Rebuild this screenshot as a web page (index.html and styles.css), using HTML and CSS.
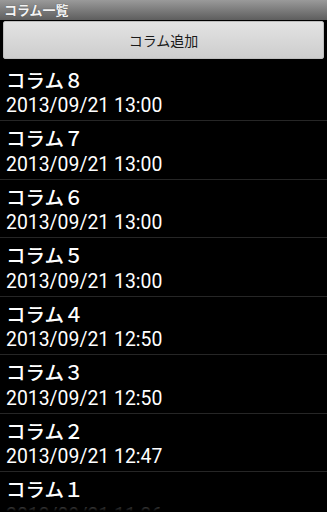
FILE: index.html
```html
<!DOCTYPE html>
<html lang="ja">
<head>
<meta charset="utf-8">
<title>コラム一覧</title>
<link rel="stylesheet" href="styles.css">
</head>
<body>
<div class="screen">
  <header class="titlebar">コラム一覧</header>
  <div class="toolbar">
    <button class="add-btn" type="button">コラム追加</button>
  </div>
  <ul class="list">
    <li class="row"><div class="name">コラム８</div><div class="date">2013/09/21 13:00</div></li>
    <li class="row"><div class="name">コラム７</div><div class="date">2013/09/21 13:00</div></li>
    <li class="row"><div class="name">コラム６</div><div class="date">2013/09/21 13:00</div></li>
    <li class="row"><div class="name">コラム５</div><div class="date">2013/09/21 13:00</div></li>
    <li class="row"><div class="name">コラム４</div><div class="date">2013/09/21 12:50</div></li>
    <li class="row"><div class="name">コラム３</div><div class="date">2013/09/21 12:50</div></li>
    <li class="row"><div class="name">コラム２</div><div class="date">2013/09/21 12:47</div></li>
    <li class="row"><div class="name">コラム１</div><div class="date">2013/09/21 11:36</div></li>
  </ul>
  <div class="fade"></div>
</div>
</body>
</html>
```
FILE: styles.css
```css
html, body {
  margin: 0;
  padding: 0;
  background: #000;
}
body {
  font-family: Roboto, "Noto Sans CJK JP", sans-serif;
  color: #fff;
}
.screen {
  position: relative;
  width: 327px;
  height: 512px;
  overflow: hidden;
  background: #000;
}
.titlebar {
  height: 20px;
  box-sizing: border-box;
  padding: 1px 0 0 4px;
  font-family: "Noto Sans CJK JP", sans-serif;
  font-weight: bold;
  font-size: 13px;
  line-height: 17px;
  color: #f4f4f4;
  text-shadow: 0 0 1px #444;
  background: linear-gradient(#9a9a9a, #5e5e5e);
}
.toolbar {
  padding: 1px 3px 3.5px 3px;
}
.add-btn {
  display: block;
  width: 100%;
  height: 38px;
  margin: 0;
  border: 1px solid #bdbdbd;
  border-radius: 2px;
  background: linear-gradient(#e3e3e3, #cdcdcd);
  font-family: "Noto Sans CJK JP", sans-serif;
  font-size: 14px;
  color: #1a1a1a;
  padding: 0;
}
.list {
  list-style: none;
  margin: 0;
  padding: 0;
}
.row {
  box-sizing: border-box;
  height: 58.5px;
  border-bottom: 1px solid #262626;
  padding: 3px 0 0 6px;
}
.name {
  font-family: "Noto Sans CJK JP", sans-serif;
  font-size: 19.5px;
  line-height: 28.5px;
  font-weight: 500;
}
.date {
  font-family: Roboto, sans-serif;
  font-size: 19.4px;
  line-height: 23px;
}
.fade {
  position: absolute;
  left: 0;
  right: 0;
  bottom: 0;
  height: 14px;
  background: linear-gradient(rgba(0,0,0,0.3), #000 95%);
}
```
